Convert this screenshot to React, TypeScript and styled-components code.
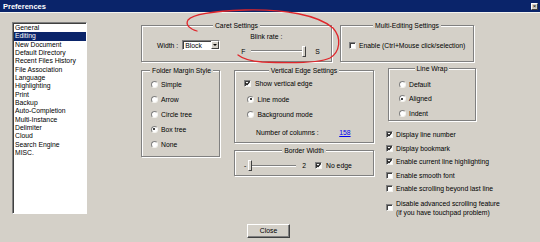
import React from 'react';
import styled, { createGlobalStyle } from 'styled-components';

const GlobalStyle = createGlobalStyle`
  body {
    margin: 0;
    background: #d4d0c8;
  }
`;

const pages = [
  'General', 'Editing', 'New Document', 'Default Directory', 'Recent Files History',
  'File Association', 'Language', 'Highlighting', 'Print', 'Backup', 'Auto-Completion',
  'Multi-Instance', 'Delimiter', 'Cloud', 'Search Engine', 'MISC.',
];

const Window = styled.div`
  position: relative;
  width: 540px;
  height: 242px;
  display: flex;
  flex-direction: column;
  background: #d4d0c8;
  font-family: "Liberation Sans", Arial, sans-serif;
  font-size: 6.8px;
  color: #000;
  overflow: hidden;
`;

const TitleBar = styled.div`
  height: 12px;
  display: flex;
  align-items: center;
  justify-content: space-between;
  padding: 0 2px 0 3px;
  background: #0a246a;
  border-bottom: 1px solid #f4f3ef;
`;

const TitleText = styled.span`
  color: #fff;
  font-weight: bold;
  font-size: 7.5px;
`;

const CloseBox = styled.span`
  width: 7px;
  height: 7px;
  display: flex;
  align-items: center;
  justify-content: center;
  background: #d4d0c8;
  border: 1px solid;
  border-color: #fff #404040 #404040 #fff;
  box-sizing: border-box;
  font-size: 6px;
  line-height: 1;
  color: #000;
`;

const Main = styled.div`
  display: flex;
  padding: 9px 0 0 12px;
`;

const ListBox = styled.div`
  width: 75px;
  height: 192px;
  box-sizing: border-box;
  background: #fff;
  border: 1px solid;
  border-color: #808080 #fff #fff #808080;
  box-shadow: inset 1px 1px 0 #404040;
  padding: 1px 0 0 1px;
`;

const ListItem = styled.div<{ $selected?: boolean }>`
  height: 8.33px;
  line-height: 8.33px;
  padding-left: 1px;
  white-space: nowrap;
  background: ${(p) => (p.$selected ? '#0a246a' : 'transparent')};
  color: ${(p) => (p.$selected ? '#fff' : '#000')};
`;

const Panels = styled.div`
  display: flex;
  flex-direction: column;
  margin: 3px 0 0 54px;
`;

const Row = styled.div<{ $gap: number; $top?: number }>`
  display: flex;
  align-items: flex-start;
  gap: ${(p) => p.$gap}px;
  margin-top: ${(p) => p.$top ?? 0}px;
`;

const Column = styled.div<{ $w: number; $gap?: number; $top?: number }>`
  width: ${(p) => p.$w}px;
  display: flex;
  flex-direction: column;
  gap: ${(p) => p.$gap ?? 0}px;
  margin-top: ${(p) => p.$top ?? 0}px;
`;

const Group = styled.div<{ $w: number; $h: number; $top?: number }>`
  width: ${(p) => p.$w}px;
  height: ${(p) => p.$h}px;
  margin-top: ${(p) => p.$top ?? 0}px;
  box-sizing: border-box;
  border: 1px solid #808080;
  box-shadow: inset 1px 1px 0 #fff, 1px 1px 0 #fff;
  display: flex;
  flex-direction: column;
`;

const GroupTitle = styled.span<{ $left?: boolean }>`
  display: table;
  height: 8px;
  line-height: 8px;
  margin: -4.5px ${(p) => (p.$left ? 'auto 0 8px' : 'auto 0 auto')};
  padding: 0 2px;
  background: #d4d0c8;
  white-space: nowrap;
`;

const GroupBody = styled.div<{ $pad: string; $gap?: number }>`
  flex: 1;
  display: flex;
  flex-direction: column;
  padding: ${(p) => p.$pad};
  gap: ${(p) => p.$gap ?? 0}px;
`;

const InlineBody = styled.div<{ $pad: string }>`
  flex: 1;
  display: flex;
  align-items: center;
  padding: ${(p) => p.$pad};
`;

const Option = styled.label<{ $h?: number; $indent?: number; $gap?: number }>`
  display: flex;
  align-items: center;
  height: ${(p) => p.$h ?? 15}px;
  gap: ${(p) => p.$gap ?? 3.5}px;
  margin-left: ${(p) => p.$indent ?? 0}px;
  white-space: nowrap;
`;

const Radio = styled.span<{ $on?: boolean }>`
  width: 7px;
  height: 7px;
  flex: none;
  box-sizing: border-box;
  border-radius: 50%;
  border: 1px solid;
  border-color: #808080 #f4f3ef #f4f3ef #808080;
  background: #fff;
  display: flex;
  align-items: center;
  justify-content: center;
  &::after {
    content: '';
    width: 2px;
    height: 2px;
    border-radius: 50%;
    background: ${(p) => (p.$on ? '#000' : 'transparent')};
  }
`;

const CheckBox = styled.span`
  width: 7px;
  height: 7px;
  flex: none;
  box-sizing: border-box;
  border: 1px solid;
  border-color: #808080 #f4f3ef #f4f3ef #808080;
  box-shadow: inset 1px 1px 0 #404040;
  background: #fff;
  display: flex;
  align-items: center;
  justify-content: center;
`;

const Check = ({ on }: { on?: boolean }) => (
  <CheckBox>
    {on && (
      <svg width="5" height="5" viewBox="0 0 5 5">
        <path d="M0.6 2.2 L2 3.6 L4.5 0.8" stroke="#000" strokeWidth="1.1" fill="none" />
      </svg>
    )}
  </CheckBox>
);

const Select = styled.div`
  width: 38px;
  height: 10px;
  margin-left: 4px;
  box-sizing: border-box;
  background: #fff;
  border: 1px solid;
  border-color: #808080 #fff #fff #808080;
  box-shadow: inset 1px 1px 0 #404040;
  display: flex;
  align-items: center;
  justify-content: space-between;
  padding-left: 2px;
`;

const SelectArrow = styled.span`
  width: 8px;
  height: 8px;
  box-sizing: border-box;
  background: #d4d0c8;
  border: 1px solid;
  border-color: #fff #404040 #404040 #fff;
  display: flex;
  align-items: center;
  justify-content: center;
  &::after {
    content: '';
    border-left: 2px solid transparent;
    border-right: 2px solid transparent;
    border-top: 2px solid #000;
  }
`;

const BlinkColumn = styled.div`
  display: flex;
  flex-direction: column;
  gap: 4px;
  margin-left: 21px;
`;

const BlinkLabel = styled.span`
  margin-left: 9px;
  line-height: 8px;
`;

const SliderRow = styled.div`
  display: flex;
  align-items: center;
  height: 12px;
`;

const Track = styled.div<{ $w: number; $thumb: 'start' | 'end' }>`
  width: ${(p) => p.$w}px;
  height: 12px;
  display: flex;
  align-items: center;
  justify-content: ${(p) => (p.$thumb === 'end' ? 'flex-end' : 'flex-start')};
  background: linear-gradient(#d4d0c8 0 5px, #808080 5px 6px, #fff 6px 7px, #d4d0c8 7px);
`;

const Thumb = styled.span`
  width: 4px;
  height: 11px;
  box-sizing: border-box;
  background: #d4d0c8;
  border: 1px solid;
  border-color: #fff #404040 #404040 #fff;
`;

const Link = styled.span`
  color: #0000ee;
  text-decoration: underline;
  margin-left: 17px;
`;

const SideChecks = styled.div`
  display: flex;
  flex-direction: column;
  margin: 7px 0 0 -2px;
`;

const MultiLine = styled.span`
  line-height: 9px;
`;

const Footer = styled.div`
  display: flex;
  justify-content: center;
  padding: 6px 3px 0 0;
`;

const Button = styled.button`
  width: 43px;
  height: 14px;
  box-sizing: border-box;
  padding: 0;
  background: #d4d0c8;
  border: 1px solid;
  border-color: #fff #404040 #404040 #fff;
  box-shadow: inset -1px -1px 0 #808080;
  font: inherit;
  color: #000;
`;

const Scribble = styled.svg`
  position: absolute;
  left: 0;
  top: 0;
  pointer-events: none;
`;

export default function App() {
  return (
    <>
      <GlobalStyle />
      <Window>
        <TitleBar>
          <TitleText>Preferences</TitleText>
          <CloseBox>×</CloseBox>
        </TitleBar>
        <Main>
          <ListBox>
            {pages.map((p) => (
              <ListItem key={p} $selected={p === 'Editing'}>
                {p}
              </ListItem>
            ))}
          </ListBox>
          <Panels>
            <Row $gap={8}>
              <Group $w={191} $h={37}>
                <GroupTitle>Caret Settings</GroupTitle>
                <InlineBody $pad="0 0 0 15px">
                  <span>Width :</span>
                  <Select>
                    <span>Block</span>
                    <SelectArrow />
                  </Select>
                  <BlinkColumn>
                    <BlinkLabel>Blink rate :</BlinkLabel>
                    <SliderRow>
                      <span>F</span>
                      <Track $w={55} $thumb="end" style={{ marginLeft: 6 }}>
                        <Thumb />
                      </Track>
                      <span style={{ marginLeft: 9 }}>S</span>
                    </SliderRow>
                  </BlinkColumn>
                </InlineBody>
              </Group>
              <Group $w={134} $h={37}>
                <GroupTitle>Multi-Editing Settings</GroupTitle>
                <InlineBody $pad="0 0 0 8px">
                  <Option $gap={3}>
                    <Check />
                    Enable (Ctrl+Mouse click/selection)
                  </Option>
                </InlineBody>
              </Group>
            </Row>
            <Row $gap={14} $top={6}>
              <Group $w={79} $h={87} $top={2}>
                <GroupTitle $left>Folder Margin Style</GroupTitle>
                <GroupBody $pad="2px 0 0 8.5px">
                  <Option><Radio />Simple</Option>
                  <Option><Radio />Arrow</Option>
                  <Option><Radio />Circle tree</Option>
                  <Option><Radio $on />Box tree</Option>
                  <Option><Radio />None</Option>
                </GroupBody>
              </Group>
              <Column $w={140} $gap={7} $top={2}>
                <Group $w={140} $h={73}>
                  <GroupTitle>Vertical Edge Settings</GroupTitle>
                  <GroupBody $pad="1px 0 0 9px">
                    <Option $gap={4}><Check on />Show vertical edge</Option>
                    <Option $indent={3} style={{ marginTop: 1 }}><Radio $on />Line mode</Option>
                    <Option $indent={3}><Radio />Background mode</Option>
                    <Option $indent={12} style={{ marginTop: 3 }}>
                      Number of columns :<Link>158</Link>
                    </Option>
                  </GroupBody>
                </Group>
                <Group $w={140} $h={26}>
                  <GroupTitle>Border Width</GroupTitle>
                  <InlineBody $pad="2px 0 0 9px">
                    <span>-</span>
                    <Track $w={48} $thumb="start" style={{ marginLeft: 2 }}>
                      <Thumb />
                    </Track>
                    <span style={{ marginLeft: 6 }}>2</span>
                    <Option $gap={4} style={{ marginLeft: 9 }}><Check on />No edge</Option>
                  </InlineBody>
                </Group>
              </Column>
              <Column $w={88}>
                <Group $w={88} $h={53}>
                  <GroupTitle>Line Wrap</GroupTitle>
                  <GroupBody $pad="4.5px 0 0 9.5px">
                    <Option $h={14.5}><Radio />Default</Option>
                    <Option $h={14.5}><Radio $on />Aligned</Option>
                    <Option $h={14.5}><Radio />Indent</Option>
                  </GroupBody>
                </Group>
                <SideChecks>
                  <Option $h={13.5} $gap={3}><Check on />Display line number</Option>
                  <Option $h={13.5} $gap={3}><Check on />Display bookmark</Option>
                  <Option $h={13.5} $gap={3}><Check on />Enable current line highlighting</Option>
                  <Option $h={13.5} $gap={3}><Check />Enable smooth font</Option>
                  <Option $h={13.5} $gap={3}><Check />Enable scrolling beyond last line</Option>
                  <Option $h={20} $gap={3} style={{ marginTop: 2 }}>
                    <Check />
                    <MultiLine>
                      Disable advanced scrolling feature
                      <br />
                      (if you have touchpad problem)
                    </MultiLine>
                  </Option>
                </SideChecks>
              </Column>
            </Row>
          </Panels>
        </Main>
        <Footer>
          <Button>Close</Button>
        </Footer>
        <Scribble width="540" height="242" viewBox="0 0 540 242">
          <path
            d="M197 31 C190 29 185 25 188 20 C193 14 215 11 245 10 C285 9 318 15 333 28 C342 38 340 52 330 58 C318 64 285 63 262 62 C250 61 243 59 238 55"
            stroke="#e0262b"
            strokeWidth="1.3"
            fill="none"
            strokeLinecap="round"
          />
        </Scribble>
      </Window>
    </>
  );
}
